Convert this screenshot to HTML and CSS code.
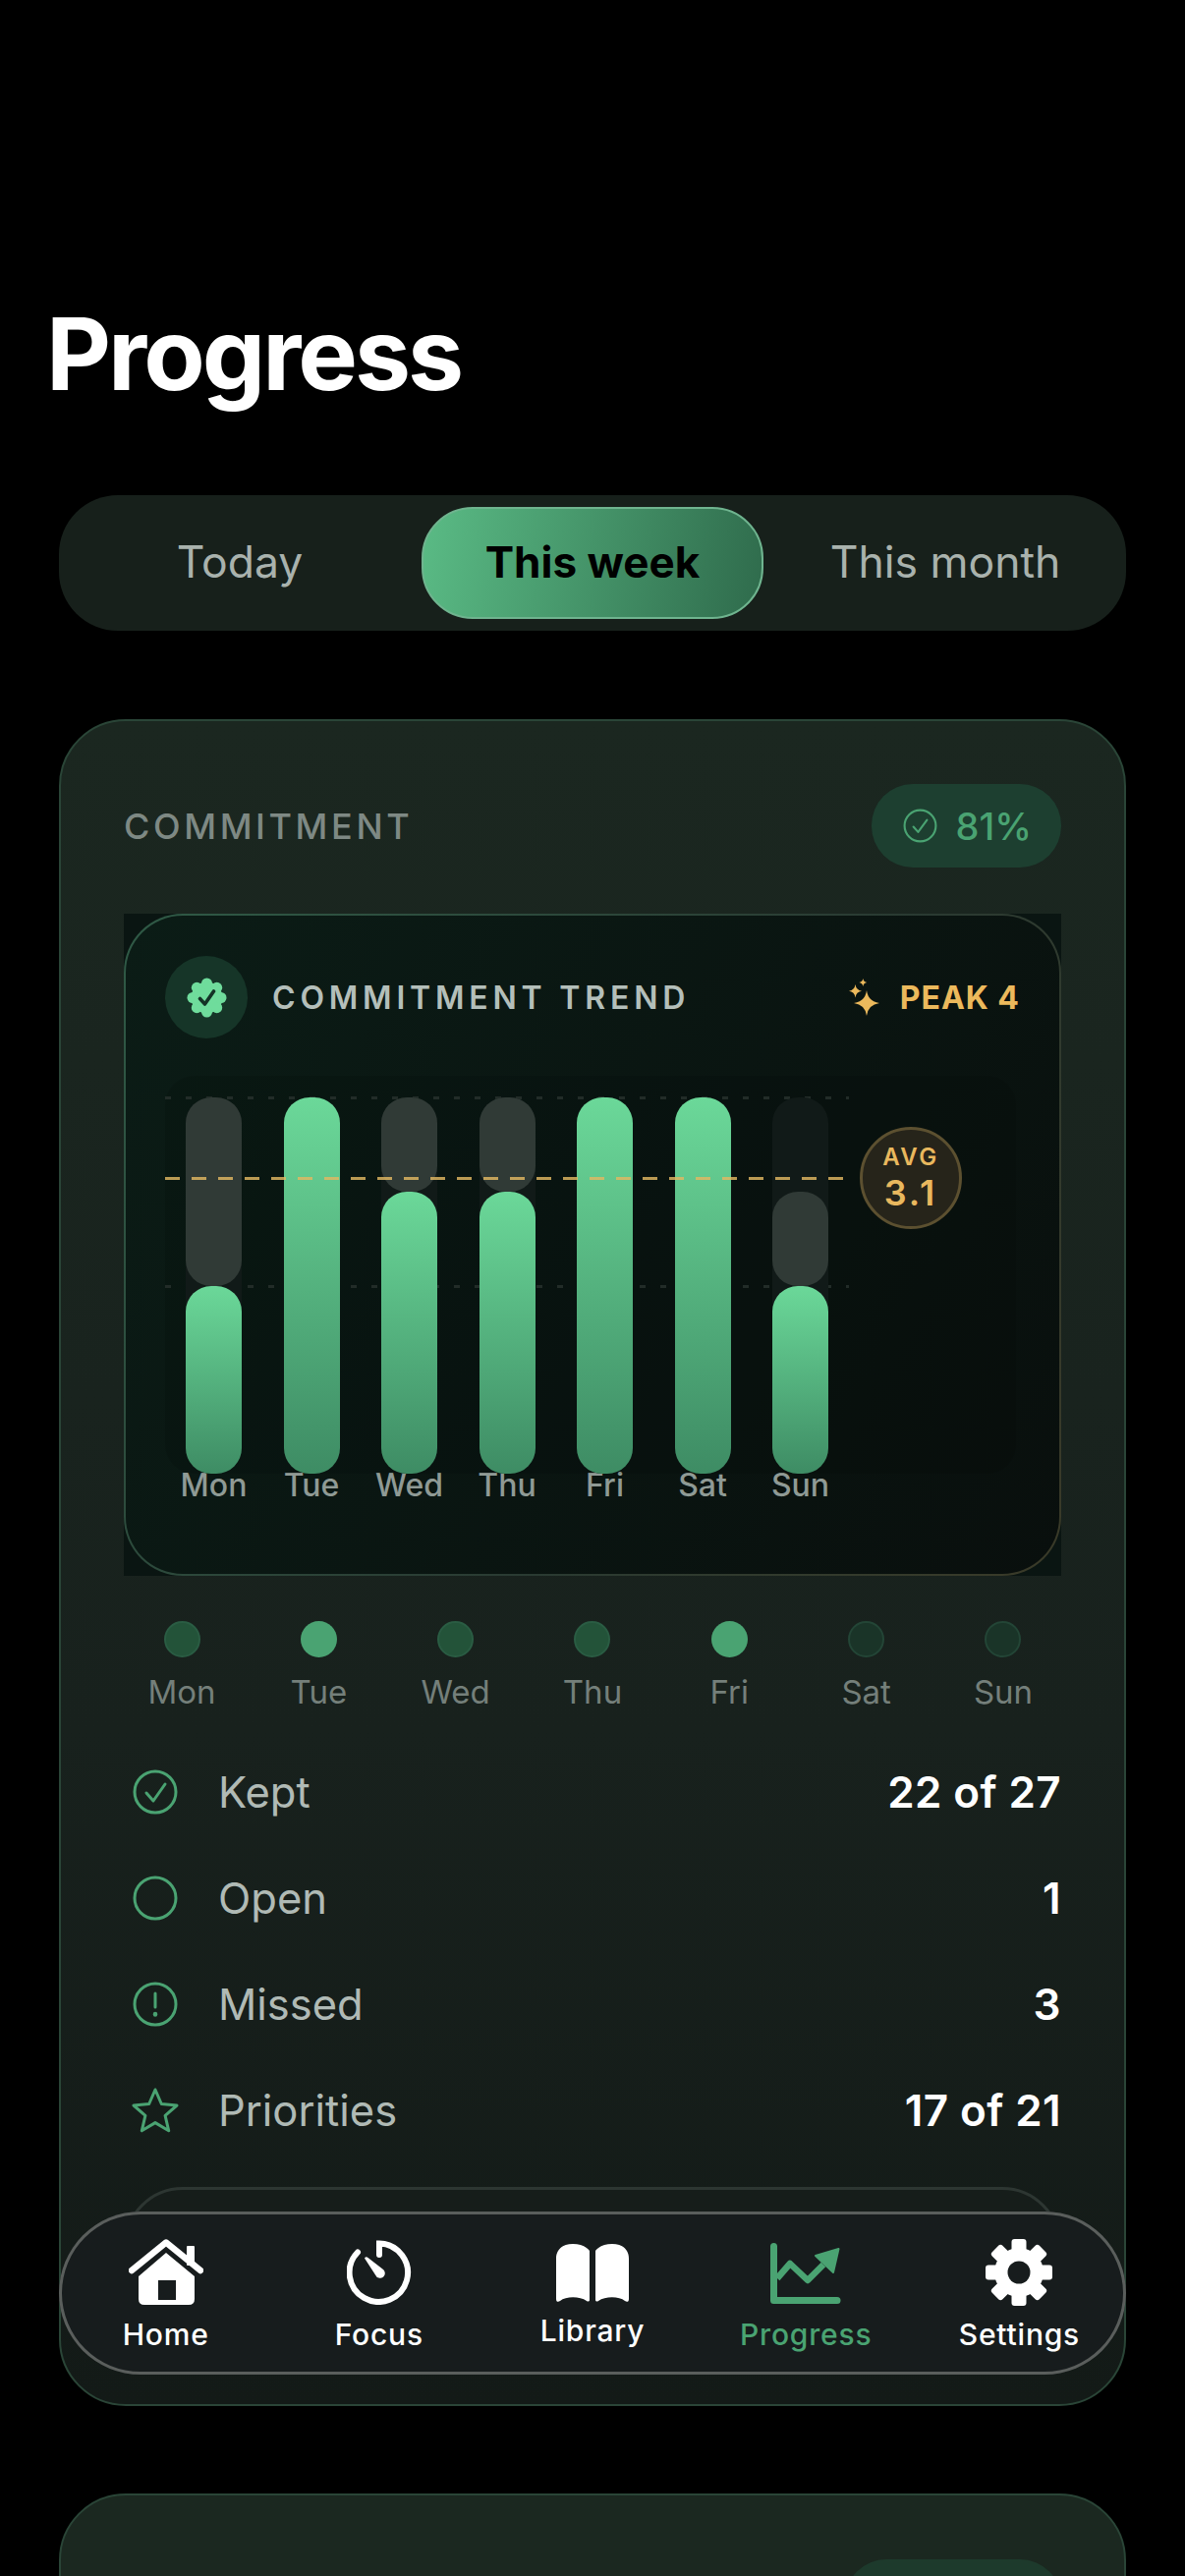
FILE: index.html
```html
<!DOCTYPE html>
<html lang="en">
<head>
<meta charset="utf-8">
<title>Progress</title>
<link rel="stylesheet" href="styles.css">
</head>
<body>
<div class="screen">
  <h1 class="title">Progress</h1>
  <div class="segments">
    <div class="seg">Today</div>
    <div class="seg seg-active">This week</div>
    <div class="seg">This month</div>
  </div>

  <section class="card">
    <header class="card-head">
      <span class="eyebrow">COMMITMENT</span>
      <span class="pill">
        <svg class="pill-icon" viewBox="0 0 33 33"><circle cx="16.5" cy="16.5" r="15" fill="none" stroke="currentColor" stroke-width="2"/><path d="M10 17.5l4.5 5L23 11" fill="none" stroke="currentColor" stroke-width="2" stroke-linecap="round" stroke-linejoin="round"/></svg>
        81%
      </span>
    </header>

    <div class="trend-wrap">
      <div class="trend">
        <div class="trend-head">
          <span class="badge">
            <svg class="badge-icon" viewBox="0 0 41 41"><g fill="#6fdc9c"><circle cx="20.5" cy="20.5" r="16"/><circle cx="20.5" cy="6" r="5.500"/><circle cx="20.5" cy="35" r="5.500"/><circle cx="6" cy="20.5" r="5.500"/><circle cx="35" cy="20.5" r="5.500"/><circle cx="10.3" cy="10.3" r="5.500"/><circle cx="30.7" cy="10.3" r="5.500"/><circle cx="10.3" cy="30.7" r="5.500"/><circle cx="30.7" cy="30.7" r="5.500"/></g><path d="M13.5 21.5l5 5.5 9-13" fill="none" stroke="#143326" stroke-width="3.6" stroke-linecap="round" stroke-linejoin="round"/></svg>
          </span>
          <span class="trend-title">COMMITMENT TREND</span>
          <span class="peak">
            <svg class="spark" viewBox="0 0 31 38"><g fill="currentColor"><path d="M18 12Q19.500 23.500 31 25Q19.500 26.500 18 38Q16.500 26.500 5 25Q16.500 23.500 18 12Z"/><path d="M6.500 6Q7.300 11.900 13 12.700Q7.300 13.500 6.500 19.400Q5.700 13.500 0 12.700Q5.700 11.900 6.500 6Z"/><path d="M14.300 0Q14.800 3.500 18.300 4Q14.800 4.500 14.300 8Q13.800 4.500 10.300 4Q13.800 3.500 14.300 0Z"/></g></svg>
            PEAK 4
          </span>
        </div>

        <div class="plot">
          <div class="grid-line grid-top"></div>
          <div class="grid-line grid-mid"></div>
          <div class="bars">
            <div class="track"><div class="seg-open h50"></div><div class="seg-kept h50"></div></div>
            <div class="track"><div class="seg-kept h100"></div></div>
            <div class="track"><div class="seg-open h25"></div><div class="seg-kept h75"></div></div>
            <div class="track"><div class="seg-open h25"></div><div class="seg-kept h75"></div></div>
            <div class="track"><div class="seg-kept h100"></div></div>
            <div class="track"><div class="seg-kept h100"></div></div>
            <div class="track"><div class="seg-open h25"></div><div class="seg-kept h50"></div></div>
          </div>
          <div class="avg-line"></div>
          <div class="avg"><span class="avg-label">AVG</span><span class="avg-value">3.1</span></div>
        </div>
        <div class="bar-labels">
          <span>Mon</span><span>Tue</span><span>Wed</span><span>Thu</span><span>Fri</span><span>Sat</span><span>Sun</span>
        </div>
      </div>
    </div>

    <div class="days">
      <div class="day"><span class="dot dot-mid"></span><span class="day-name">Mon</span></div>
      <div class="day"><span class="dot dot-high"></span><span class="day-name">Tue</span></div>
      <div class="day"><span class="dot dot-mid"></span><span class="day-name">Wed</span></div>
      <div class="day"><span class="dot dot-mid"></span><span class="day-name">Thu</span></div>
      <div class="day"><span class="dot dot-high"></span><span class="day-name">Fri</span></div>
      <div class="day"><span class="dot dot-low"></span><span class="day-name">Sat</span></div>
      <div class="day"><span class="dot dot-low"></span><span class="day-name">Sun</span></div>
    </div>

    <div class="rows">
      <div class="row">
        <svg class="row-icon" viewBox="0 0 48 48"><circle cx="24" cy="24" r="21" /><path d="M15 25l7 8 12-17"/></svg>
        <span class="row-label">Kept</span><span class="row-value">22 of 27</span>
      </div>
      <div class="row">
        <svg class="row-icon" viewBox="0 0 48 48"><circle cx="24" cy="24" r="21"/></svg>
        <span class="row-label">Open</span><span class="row-value">1</span>
      </div>
      <div class="row">
        <svg class="row-icon" viewBox="0 0 48 48"><circle cx="24" cy="24" r="21"/><path d="M24 13v14"/><path class="fine" d="M24 34v.5"/></svg>
        <span class="row-label">Missed</span><span class="row-value">3</span>
      </div>
      <div class="row">
        <svg class="row-icon" viewBox="0 0 48 48"><path d="M24 3l6.300 14.500 15.700 1.500-11.900 10.400 3.600 15.400L24 36.600 10.300 44.800l3.600-15.400L2 19l15.700-1.500z"/></svg>
        <span class="row-label">Priorities</span><span class="row-value">17 of 21</span>
      </div>
    </div>

    <div class="subcard"></div>
  </section>

  <section class="card card-next">
    <div class="next-head"><span class="pill pill-next"></span></div>
  </section>

  <nav class="tabbar">
    <div class="tab">
      <svg class="tab-icon ic-home" viewBox="0 0 76 68"><rect x="59" y="7" width="8" height="20" rx="1" fill="#fff"/><path d="M3 32L38 3.500 73 32" fill="none" stroke="#fff" stroke-width="6.500" stroke-linecap="round" stroke-linejoin="round"/><path fill-rule="evenodd" fill="#fff" d="M38 14L67 38V61Q67 67 61 67H16Q10 67 10 61V38ZM30 42V62H48V42Z"/></svg>
      <span>Home</span>
    </div>
    <div class="tab">
      <svg class="tab-icon ic-focus" viewBox="0 0 66 66"><path d="M33 15V3.500A29.700 29.700 0 1 1 11 12.500" fill="none" stroke="#fff" stroke-width="6" stroke-linecap="round"/><path fill="#fff" d="M18 18.500Q19.500 16.500 21.500 18L37 30Q39.500 32.500 38.500 35.500Q36.500 39.500 32.500 38.500Q30 38 29 35.500Z"/></svg>
      <span>Focus</span>
    </div>
    <div class="tab">
      <svg class="tab-icon ic-lib" viewBox="0 0 74 59"><g fill="#fff"><path d="M34 7C31 3 25 0 17 0 6 0 0 6 0 15V56C0 59 2 59.500 4 58 10 53 24 53 31 58 32.500 59 34 58.500 34 57Z"/><path d="M40 7C43 3 49 0 57 0 68 0 74 6 74 15V56C74 59 72 59.500 70 58 64 53 50 53 43 58 41.500 59 40 58.500 40 57Z"/></g></svg>
      <span>Library</span>
    </div>
    <div class="tab tab-active">
      <svg class="tab-icon ic-prog" viewBox="0 0 72 62"><path d="M3.500 3.500V58.500H68" fill="none" stroke="#4aa372" stroke-width="7" stroke-linecap="round" stroke-linejoin="round"/><path d="M7 36L20 21 38 38 54 22" fill="none" stroke="#4aa372" stroke-width="6.500" stroke-linejoin="round"/><path d="M69.500 6L64 30 46 13Z" fill="#4aa372" stroke="#4aa372" stroke-width="2" stroke-linejoin="round"/></svg>
      <span>Progress</span>
    </div>
    <div class="tab">
      <svg class="tab-icon ic-gear" viewBox="-34 -34 68 68"><g fill="#fff"><circle r="25"/><rect x="-7.500" y="-34" width="15" height="16" rx="3"/><rect x="-7.500" y="-34" width="15" height="16" rx="3" transform="rotate(45)"/><rect x="-7.500" y="-34" width="15" height="16" rx="3" transform="rotate(90)"/><rect x="-7.500" y="-34" width="15" height="16" rx="3" transform="rotate(135)"/><rect x="-7.500" y="-34" width="15" height="16" rx="3" transform="rotate(180)"/><rect x="-7.500" y="-34" width="15" height="16" rx="3" transform="rotate(225)"/><rect x="-7.500" y="-34" width="15" height="16" rx="3" transform="rotate(270)"/><rect x="-7.500" y="-34" width="15" height="16" rx="3" transform="rotate(315)"/></g><circle r="11.500" fill="#171c1d"/></svg>
      <span>Settings</span>
    </div>
  </nav>
</div>
</body>
</html>
```
FILE: styles.css
```css
* { box-sizing: border-box; }
html, body { margin: 0; padding: 0; background: #000; }
body { font-family: Inter, "Liberation Sans", sans-serif; color: #fff; }

.screen {
  position: relative;
  width: 1206px;
  height: 2622px;
  overflow: hidden;
  padding: 300px 60px 0;
}

.title {
  margin: 0 0 0 -13px;
  font-size: 102px;
  line-height: 120px;
  font-weight: 700;
  letter-spacing: -3px;
}

.segments {
  display: flex;
  gap: 13px;
  margin-top: 84px;
  height: 138px;
  padding: 12px;
  border-radius: 60px;
  background: #17201b;
}
.seg {
  flex: 1;
  display: flex;
  align-items: center;
  justify-content: center;
  padding-bottom: 2px;
  font-size: 44.5px;
  color: #a9b2ad;
  border-radius: 52px;
}
.seg-active {
  font-weight: 700;
  font-size: 44px;
  color: #000;
  background: linear-gradient(100deg, #5abb85, #2f6b4c);
  border: 2px solid #6fb48f;
}

.card {
  margin-top: 90px;
  padding: 64px 64px 41px;
  border: 2px solid #2a4537;
  border-radius: 68px;
  background: linear-gradient(180deg, #1b2720 0%, #18211d 60%, #131a17 100%);
}
.card-head {
  display: flex;
  align-items: center;
  justify-content: space-between;
  height: 85px;
}
.eyebrow {
  font-size: 36px;
  font-weight: 500;
  letter-spacing: 3.6px;
  color: #7e8984;
}
.pill {
  display: flex;
  align-items: center;
  gap: 19px;
  height: 85px;
  padding: 0 30px 0 32px;
  border-radius: 42px;
  background: #1d3f30;
  color: #4aa372;
  font-size: 38px;
  font-weight: 500;
}
.pill-icon { width: 35px; height: 35px; }

.trend-wrap {
  margin-top: 47px;
  height: 674px;
  background: #0a1512;
}
.trend {
  height: 100%;
  padding: 41px 40px 0;
  border: 2px solid transparent;
  border-radius: 60px;
  background:
    linear-gradient(120deg, #0b1c16, #090f0d) padding-box,
    linear-gradient(120deg, #2f5a46, #2a3a32 60%, #3a3a28) border-box;
}
.trend-head { display: flex; align-items: center; }
.badge {
  display: flex;
  align-items: center;
  justify-content: center;
  width: 84px;
  height: 84px;
  border-radius: 50%;
  background: #163528;
}
.badge-icon { width: 41px; height: 41px; }
.trend-title {
  margin-left: 25px;
  font-size: 32px;
  font-weight: 600;
  letter-spacing: 4.8px;
  color: #b4bfba;
}
.peak {
  display: flex;
  align-items: center;
  gap: 21px;
  margin-left: auto;
  font-size: 32px;
  font-weight: 700;
  letter-spacing: 1px;
  color: #ecb95c;
}
.spark { width: 31px; height: 38px; }

.plot {
  position: relative;
  margin-top: 38px;
  margin-right: 4px;
  height: 405px;
  padding: 22px 0 0 21px;
  border-radius: 30px;
  background: rgba(0, 0, 0, 0.1);
}
.bars { position: relative; display: flex; gap: 42.5px; height: 383px; }
.track {
  display: flex;
  flex-direction: column;
  width: 57px;
  background: #111a18;
  border-radius: 26px;
}
.seg-open { background: #303a36; border-radius: 26px; }
.seg-kept {
  margin-top: auto;
  background: linear-gradient(180deg, #6bd899, #3e8c64);
  border-radius: 26px;
}
.seg-open + .seg-kept { margin-top: 0; }
.track:last-child .seg-open { margin-top: auto; }
.h25 { height: 25%; }
.h50 { height: 50%; }
.h75 { height: 75%; }
.h100 { height: 100%; }

.grid-line {
  position: absolute;
  left: 0;
  width: 696px;
  height: 3px;
  background: repeating-linear-gradient(90deg, #222c28 0 6px, transparent 6px 21px);
}
.grid-top { top: 21px; }
.grid-mid { top: 213px; }
.avg-line {
  position: absolute;
  left: 0;
  top: 103px;
  width: 690px;
  height: 3px;
  background: repeating-linear-gradient(90deg, rgba(226, 184, 98, 0.82) 0 15px, transparent 15px 27px);
}
.avg {
  position: absolute;
  left: 707px;
  top: 52px;
  width: 104px;
  height: 104px;
  display: flex;
  flex-direction: column;
  align-items: center;
  justify-content: center;
  border: 3px solid #5c5030;
  border-radius: 50%;
  background: #26241a;
  color: #e9b85e;
}
.avg-label { font-size: 24px; line-height: 30px; font-weight: 600; letter-spacing: 2.5px; }
.avg-value { font-size: 36px; line-height: 42px; font-weight: 600; letter-spacing: 3px; }

.bar-labels {
  display: flex;
  gap: 42.5px;
  margin-top: -5px;
  padding-left: 21px;
  height: 40px;
}
.bar-labels span {
  width: 57px;
  display: flex;
  justify-content: center;
  font-size: 32px;
  line-height: 34px;
  font-weight: 500;
  color: #8f9a95;
  white-space: nowrap;
}

.days {
  display: flex;
  justify-content: space-between;
  margin-top: 46px;
}
.day {
  width: 118px;
  display: flex;
  flex-direction: column;
  align-items: center;
}
.dot { width: 37px; height: 37px; border-radius: 50%; border: 2px solid transparent; }
.dot-mid { background: #235339; border-color: #2a5c43; }
.dot-high { background: #4aa372; }
.dot-low { background: #1a3428; border-color: #234536; }
.day-name {
  margin-top: 15px;
  font-size: 33px;
  line-height: 40px;
  font-weight: 400;
  color: #747f7a;
}

.rows { margin-top: 28px; }
.row {
  display: flex;
  align-items: center;
  height: 108px;
}
.row-icon {
  width: 48px;
  height: 48px;
  margin: 0 40px 0 8px;
  fill: none;
  stroke: #4aa372;
  stroke-width: 3;
  stroke-linecap: round;
  stroke-linejoin: round;
}
.row-icon .fine { stroke-width: 4.500; }
.row-label { font-size: 43.5px; color: #b0bab5; }
.row-value { margin-left: auto; font-size: 44px; font-weight: 600; letter-spacing: 0.4px; color: #fff; }

.subcard {
  height: 180px;
  margin-top: 24px;
  border: 3px solid #2d3632;
  border-radius: 60px;
  background: #161d1a;
}

.card-next {
  margin-top: 89px;
  height: 300px;
  padding-top: 65px;
  background: #1b2820;
}
.next-head { display: flex; justify-content: flex-end; }
.pill-next { width: 220px; background: #1d3a2c; }

.tabbar {
  position: absolute;
  left: 60px;
  top: 2251px;
  width: 1086px;
  height: 166px;
  display: flex;
  box-shadow: inset 0 0 0 3px #5a5e5c;
  border-radius: 83px;
  background: #171c1d;
}
.tab {
  flex: 1;
  display: flex;
  flex-direction: column;
  align-items: center;
  padding-top: 28px;
  font-size: 30px;
  line-height: 36px;
  font-weight: 500;
  letter-spacing: 0.8px;
  color: #fff;
}
.tab span { margin-top: 11px; }
.tab-active { color: #4aa372; }
.tab-icon { display: block; }
.ic-home { width: 76px; height: 68px; }
.ic-focus { width: 66px; height: 66px; margin-top: 1px; margin-bottom: 1px; }
.ic-lib { width: 74px; height: 59px; margin-top: 5px; }
.ic-prog { width: 72px; height: 62px; margin-top: 4px; margin-bottom: 2px; }
.ic-gear { width: 68px; height: 68px; }
```
